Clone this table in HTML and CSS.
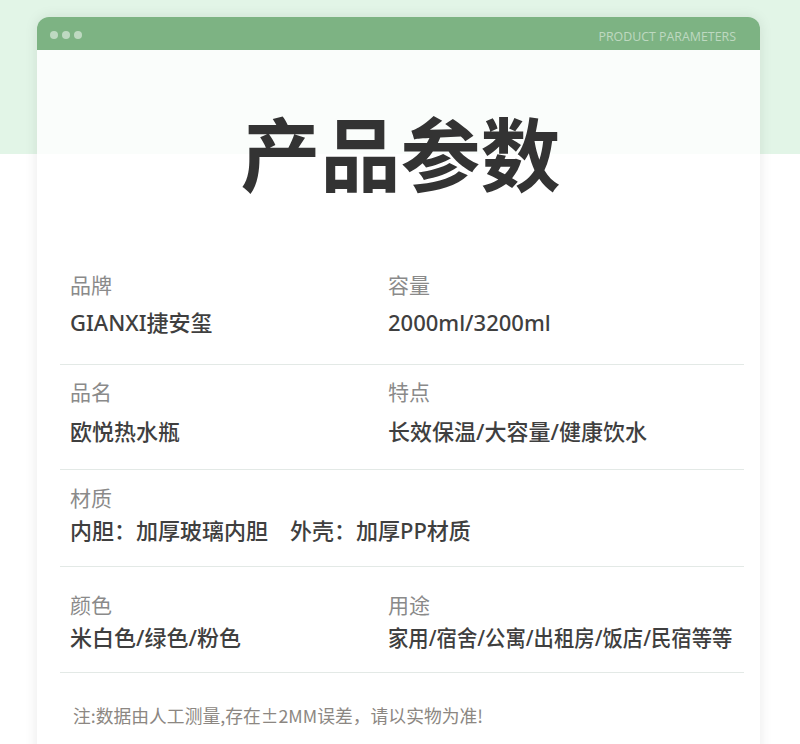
FILE: index.html
```html
<!DOCTYPE html>
<html lang="zh-CN">
<head>
<meta charset="utf-8">
<title>产品参数</title>
<link rel="stylesheet" href="styles.css">
</head>
<body>
<div class="band"></div>
<div class="page">
  <div class="card">
    <div class="card-head">
      <div class="dots"><span></span><span></span><span></span></div>
      <div class="head-text">PRODUCT PARAMETERS</div>
    </div>
    <div class="card-body">
      <h1 class="title">产品参数</h1>
      <div class="rows">
        <div class="row row-1">
          <div class="cell"><div class="label">品牌</div><div class="value">GIANXI捷安玺</div></div>
          <div class="cell"><div class="label">容量</div><div class="value">2000ml/3200ml</div></div>
        </div>
        <div class="row row-2">
          <div class="cell"><div class="label">品名</div><div class="value">欧悦热水瓶</div></div>
          <div class="cell"><div class="label">特点</div><div class="value">长效保温/大容量/健康饮水</div></div>
        </div>
        <div class="row row-3 single">
          <div class="cell"><div class="label">材质</div><div class="value">内胆：加厚玻璃内胆&emsp;外壳：加厚PP材质</div></div>
        </div>
        <div class="row row-4">
          <div class="cell"><div class="label">颜色</div><div class="value">米白色/绿色/粉色</div></div>
          <div class="cell"><div class="label">用途</div><div class="value squeeze">家用/宿舍/公寓/出租房/饭店/民宿等等</div></div>
        </div>
      </div>
      <p class="note">注:数据由人工测量,存在±2MM误差，请以实物为准!</p>
    </div>
  </div>
</div>
</body>
</html>
```
FILE: styles.css
```css
html, body {
  margin: 0;
  padding: 0;
  background: #ffffff;
  font-family: "Noto Sans", "Noto Sans CJK SC", sans-serif;
}
body {
  position: relative;
  height: 744px;
  overflow: hidden;
}
.band {
  height: 154px;
  background: #e2f5e7;
}
.page {
  position: absolute;
  top: 17px;
  left: 37px;
  width: 723px;
}
.card {
  border-radius: 12px 12px 0 0;
  box-shadow: 0 0 14px rgba(0, 0, 0, 0.09);
  overflow: hidden;
}
.card-head {
  height: 33px;
  background: #7db383;
  display: flex;
  align-items: center;
  justify-content: space-between;
  padding: 0 24px 0 13px;
}
.dots {
  display: flex;
  gap: 4px;
  margin-top: 2px;
}
.dots span {
  width: 8px;
  height: 8px;
  border-radius: 50%;
  background: rgba(255, 255, 255, 0.5);
}
.head-text {
  font-family: "Open Sans", "Noto Sans", sans-serif;
  font-size: 12.4px;
  color: rgba(255, 255, 255, 0.5);
  margin-top: 5px;
}
.card-body {
  background: rgba(255, 255, 255, 0.82);
  padding: 60px 16px 40px 23px;
}
.title {
  margin: 0;
  text-align: center;
  font-family: "Noto Sans CJK SC", sans-serif;
  font-size: 80px;
  line-height: 80px;
  font-weight: 700;
  color: #333333;
  padding-right: 3px;
}
.rows {
  margin-top: 79px;
}
.row {
  display: grid;
  grid-template-columns: 318px 1fr;
  padding-left: 10px;
  border-bottom: 1px solid #e3e9e6;
}
.row.single {
  grid-template-columns: 1fr;
}
.label {
  font-family: "Noto Sans CJK SC", sans-serif;
  font-size: 21px;
  line-height: 30px;
  color: #8a8a8a;
}
.value {
  font-family: "Noto Sans", "Noto Sans CJK SC", sans-serif;
  font-size: 22px;
  line-height: 30px;
  font-weight: 500;
  color: #3f3f3f;
  white-space: nowrap;
}
.squeeze {
  transform: scaleX(0.925);
  transform-origin: left center;
}
.row-1 { padding-top: 0; padding-bottom: 27px; }
.row-1 .value { margin-top: 8px; }
.row-2 { padding-top: 11px; padding-bottom: 23px; }
.row-2 .value { margin-top: 10px; }
.row-3 { padding-top: 12px; padding-bottom: 21px; }
.row-3 .value { margin-top: 3px; }
.row-4 { padding-top: 22px; padding-bottom: 20px; }
.row-4 .value { margin-top: 3px; }
.note {
  margin: 29px 0 0 13px;
  font-family: "Noto Sans CJK SC", sans-serif;
  font-size: 17.8px;
  line-height: 26px;
  color: #8c8782;
}
```
